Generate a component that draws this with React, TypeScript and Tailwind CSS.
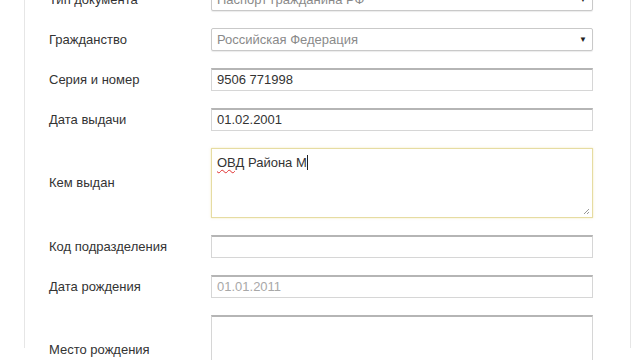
import React from "react";

const Row: React.FC<{ label: string; children: React.ReactNode }> = ({ label, children }) => (
  <div className="flex items-center">
    <div className="w-[162px] shrink-0 text-[13px] text-[#333]">{label}</div>
    <div className="w-[382px]">{children}</div>
  </div>
);

const Select: React.FC<{ value: string }> = ({ value }) => (
  <div className="h-[23px] flex items-center justify-between border border-[#c9c9c9] rounded-[2px] bg-white pl-[5px] pr-[5px] text-[13px] text-[#8a8a8a] shadow-[0_1px_1px_rgba(0,0,0,0.08)]">
    <span>{value}</span>
    <span className="text-[8px] text-[#222]">▼</span>
  </div>
);

const Input: React.FC<{ value?: string; muted?: boolean }> = ({ value, muted }) => (
  <div
    className={
      "h-[23px] flex items-center border border-[#d6d6d6] border-t-[#b5b5b5] border-t-2 bg-white pl-[5px] text-[13px] " +
      (muted ? "text-[#a8a8a8]" : "text-[#333]")
    }
  >
    {value}
  </div>
);

export default function App() {
  return (
    <div className="w-[640px] h-[360px] overflow-hidden bg-white font-['Liberation_Sans',Arial,sans-serif]">
      <div className="ml-[24px] w-[607px] h-[360px] border-l border-r border-[#e6e6e6]">
        <div className="-mt-[12px] pl-[24px] flex flex-col gap-[17px]">
          <Row label="Тип документа">
            <Select value="Паспорт гражданина РФ" />
          </Row>
          <Row label="Гражданство">
            <Select value="Российская Федерация" />
          </Row>
          <Row label="Серия и номер">
            <Input value="9506 771998" />
          </Row>
          <Row label="Дата выдачи">
            <Input value="01.02.2001" />
          </Row>
          <Row label="Кем выдан">
            <div className="relative h-[70px] border border-[#e6dca2] bg-white pl-[5px] pt-[4px] text-[13px] text-[#333] shadow-[0_0_2px_rgba(230,210,120,0.5)]">
              <span className="underline decoration-wavy decoration-[#e03030] decoration-1 underline-offset-2">ОВД</span>
              <span> Района М</span>
              <span className="inline-block w-px h-[15px] bg-[#222] align-middle -mt-[2px]" />
              <svg className="absolute right-[2px] bottom-[2px]" width="7" height="7" viewBox="0 0 7 7">
                <path d="M6 1 L1 6 M6 4 L4 6" stroke="#999" strokeWidth="1" />
              </svg>
            </div>
          </Row>
          <Row label="Код подразделения">
            <Input />
          </Row>
          <Row label="Дата рождения">
            <Input value="01.01.2011" muted />
          </Row>
          <Row label="Место рождения">
            <div className="h-[70px] border border-[#d6d6d6] border-t-[#b5b5b5] border-t-2 bg-white" />
          </Row>
        </div>
      </div>
    </div>
  );
}
